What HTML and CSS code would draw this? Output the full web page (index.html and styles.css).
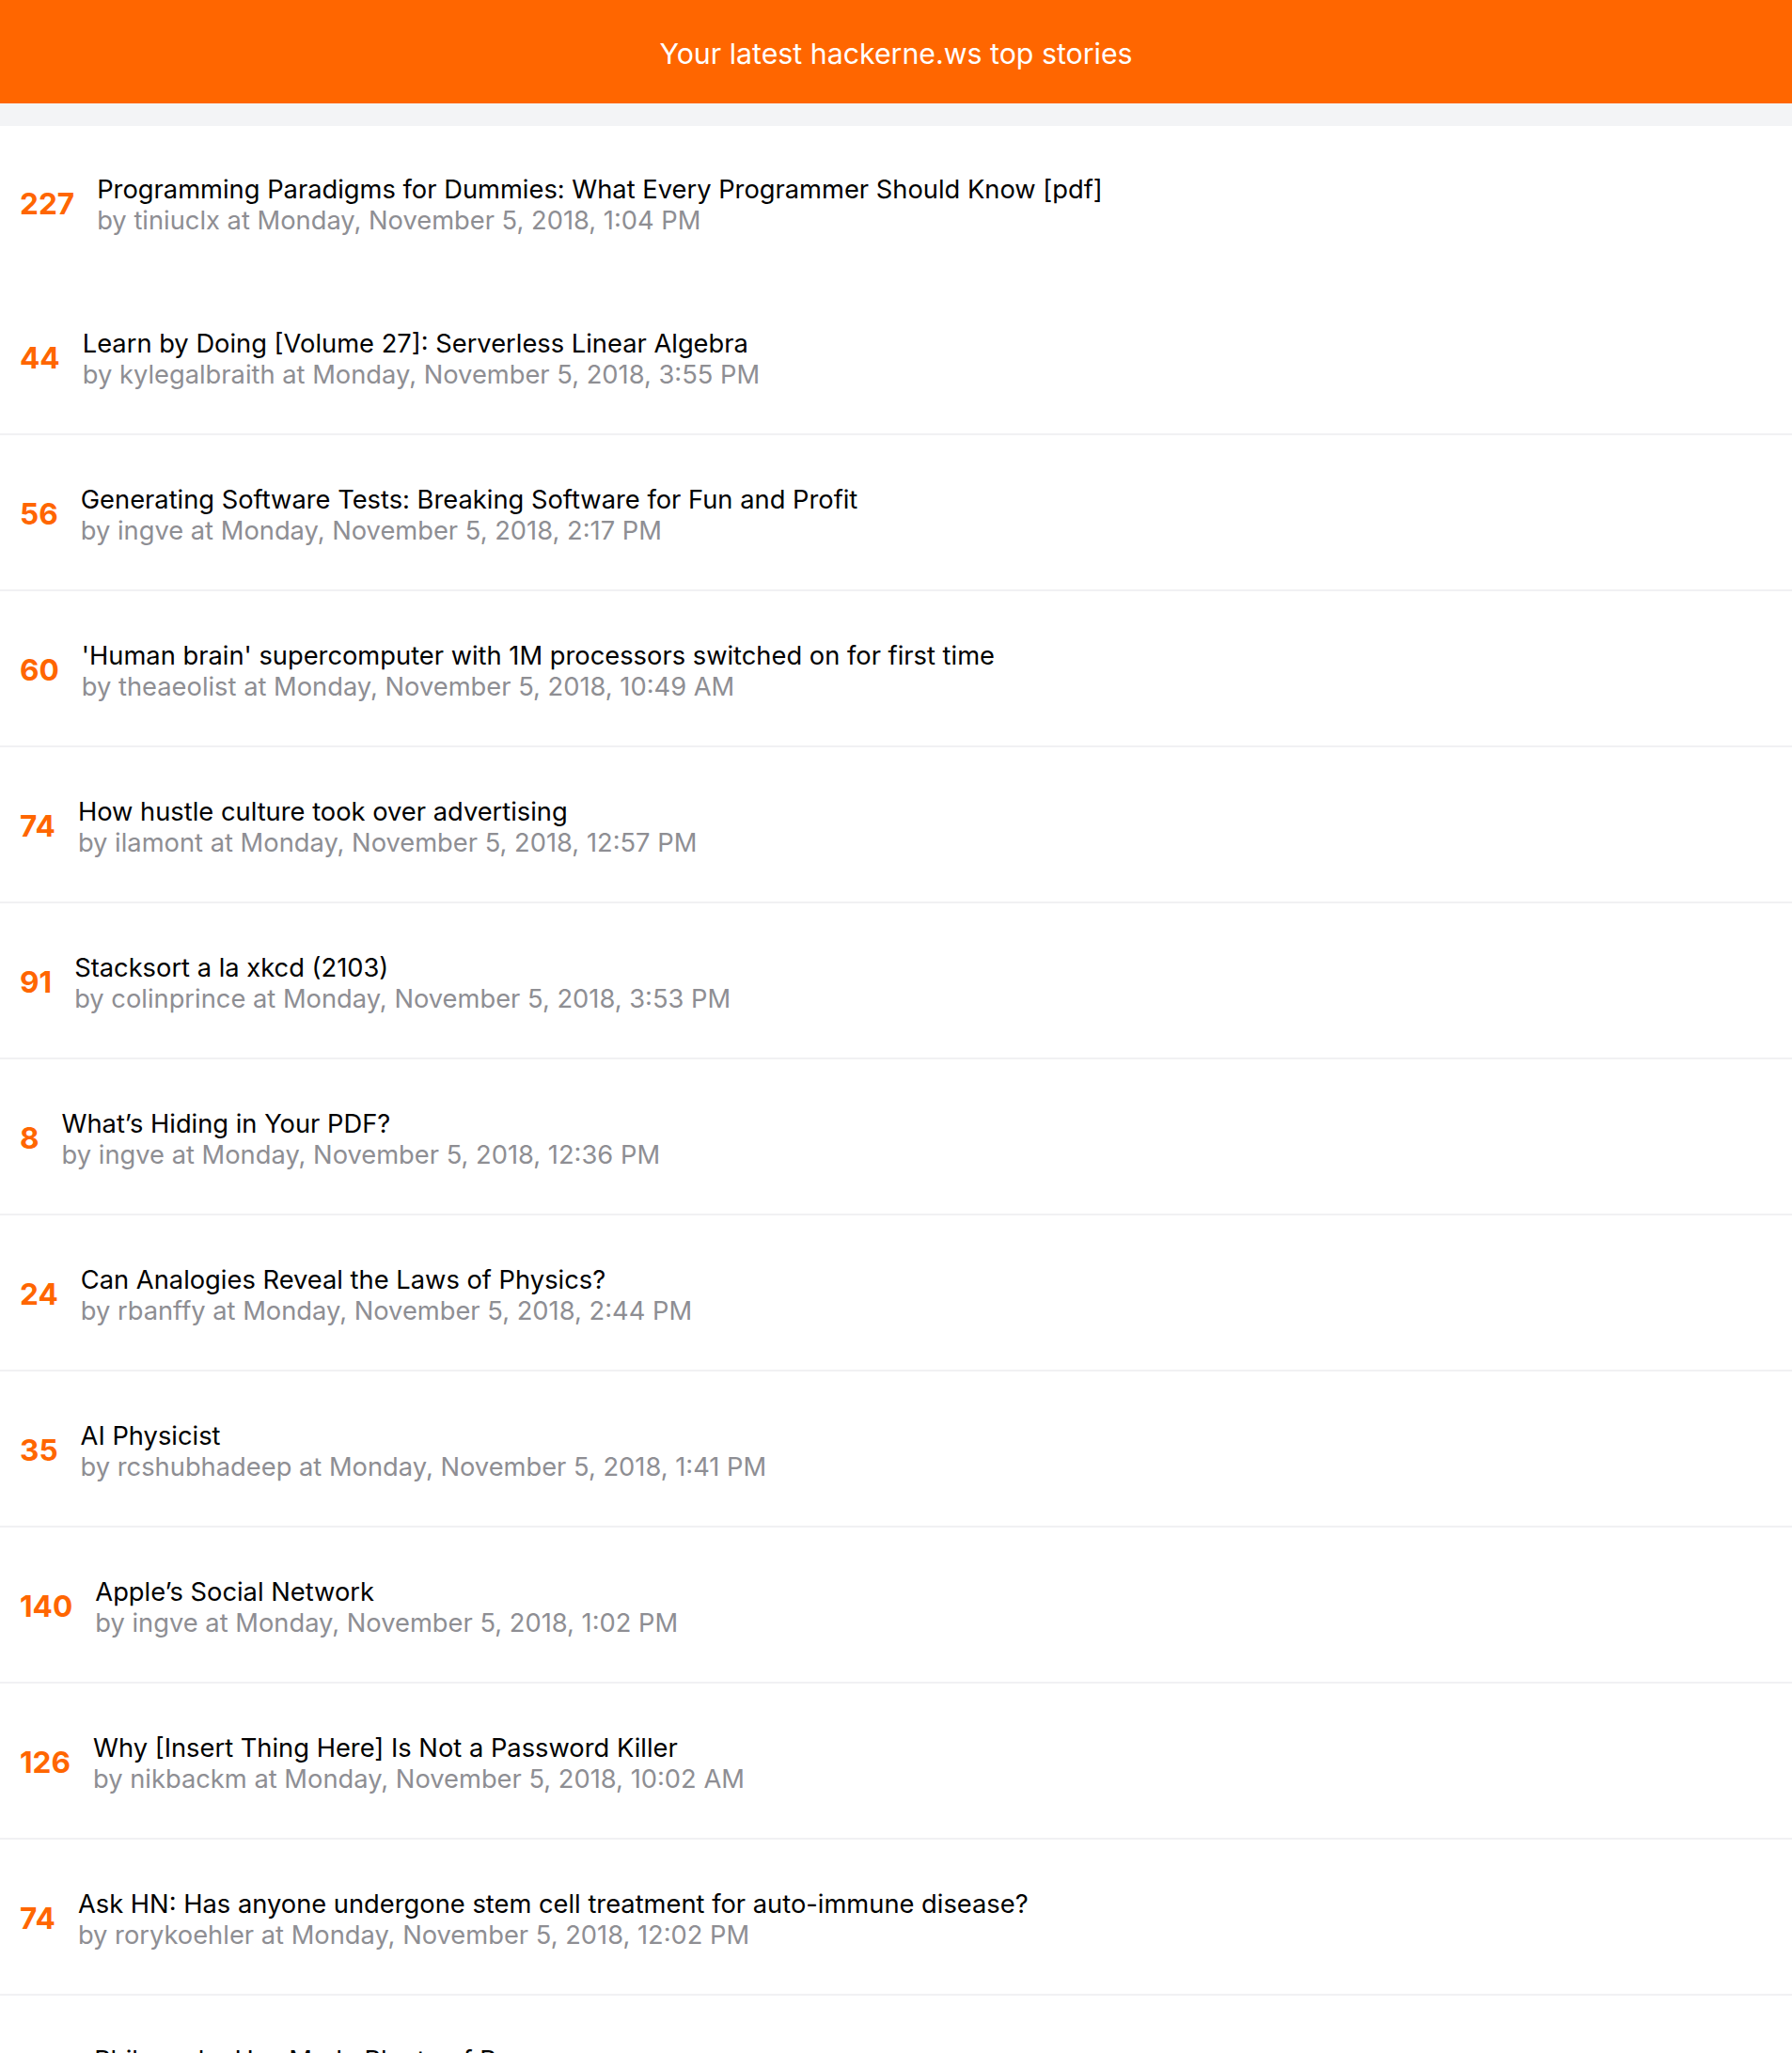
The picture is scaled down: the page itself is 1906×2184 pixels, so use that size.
FILE: index.html
```html
<!DOCTYPE html>
<html lang="en">
<head>
<meta charset="utf-8">
<title>hackerne.ws</title>
<link rel="stylesheet" href="styles.css">
</head>
<body>
<header class="topbar">Your latest hackerne.ws top stories</header>
<div class="band"></div>
<ul class="stories">
  <li class="story story-first"><span class="score">227</span><div class="text"><div class="title">Programming Paradigms for Dummies: What Every Programmer Should Know [pdf]</div><div class="meta">by tiniuclx at Monday, November 5, 2018, 1:04 PM</div></div></li>
  <li class="story"><span class="score">44</span><div class="text"><div class="title">Learn by Doing [Volume 27]: Serverless Linear Algebra</div><div class="meta">by kylegalbraith at Monday, November 5, 2018, 3:55 PM</div></div></li>
  <li class="story"><span class="score">56</span><div class="text"><div class="title">Generating Software Tests: Breaking Software for Fun and Profit</div><div class="meta">by ingve at Monday, November 5, 2018, 2:17 PM</div></div></li>
  <li class="story"><span class="score">60</span><div class="text"><div class="title">'Human brain' supercomputer with 1M processors switched on for first time</div><div class="meta">by theaeolist at Monday, November 5, 2018, 10:49 AM</div></div></li>
  <li class="story"><span class="score">74</span><div class="text"><div class="title">How hustle culture took over advertising</div><div class="meta">by ilamont at Monday, November 5, 2018, 12:57 PM</div></div></li>
  <li class="story"><span class="score">91</span><div class="text"><div class="title">Stacksort a la xkcd (2103)</div><div class="meta">by colinprince at Monday, November 5, 2018, 3:53 PM</div></div></li>
  <li class="story"><span class="score">8</span><div class="text"><div class="title">What’s Hiding in Your PDF?</div><div class="meta">by ingve at Monday, November 5, 2018, 12:36 PM</div></div></li>
  <li class="story"><span class="score">24</span><div class="text"><div class="title">Can Analogies Reveal the Laws of Physics?</div><div class="meta">by rbanffy at Monday, November 5, 2018, 2:44 PM</div></div></li>
  <li class="story"><span class="score">35</span><div class="text"><div class="title">AI Physicist</div><div class="meta">by rcshubhadeep at Monday, November 5, 2018, 1:41 PM</div></div></li>
  <li class="story"><span class="score">140</span><div class="text"><div class="title">Apple’s Social Network</div><div class="meta">by ingve at Monday, November 5, 2018, 1:02 PM</div></div></li>
  <li class="story"><span class="score">126</span><div class="text"><div class="title">Why [Insert Thing Here] Is Not a Password Killer</div><div class="meta">by nikbackm at Monday, November 5, 2018, 10:02 AM</div></div></li>
  <li class="story"><span class="score">74</span><div class="text"><div class="title">Ask HN: Has anyone undergone stem cell treatment for auto-immune disease?</div><div class="meta">by rorykoehler at Monday, November 5, 2018, 12:02 PM</div></div></li>
  <li class="story"><span class="score">105</span><div class="text"><div class="title">Philosophy Has Made Plenty of Progress</div><div class="meta">by pseudolus at Monday, November 5, 2018, 11:20 AM</div></div></li>
</ul>
</body>
</html>
```
FILE: styles.css
```css
html, body {
  margin: 0;
  padding: 0;
  background: #ffffff;
}
body {
  font-family: "Inter", "Roboto", "Liberation Sans", sans-serif;
  -webkit-font-smoothing: antialiased;
}
.topbar {
  height: 110px;
  background: #ff6600;
  color: #ffffff;
  font-size: 30.3px;
  font-weight: 400;
  display: flex;
  align-items: center;
  justify-content: center;
  padding-top: 3px;
  box-sizing: border-box;
}
.band {
  height: 24px;
  background: #f3f4f6;
}
.stories {
  list-style: none;
  margin: 0;
  padding: 0;
}
.story {
  height: 166px;
  box-sizing: border-box;
  border-bottom: 2px solid #f1f1f3;
  display: flex;
  align-items: center;
  gap: 24px;
  padding: 5px 0 0 21px;
}
.story-first {
  height: 163px;
  border-bottom: none;
}
.score {
  color: #ff6600;
  font-weight: 700;
  font-size: 31.6px;
  margin-top: -3px;
}
.text {
  display: flex;
  flex-direction: column;
}
.title {
  color: #000000;
  font-size: 27.3px;
  line-height: 33px;
}
.meta {
  color: #8e8e93;
  font-size: 27.3px;
  line-height: 33px;
}
```
